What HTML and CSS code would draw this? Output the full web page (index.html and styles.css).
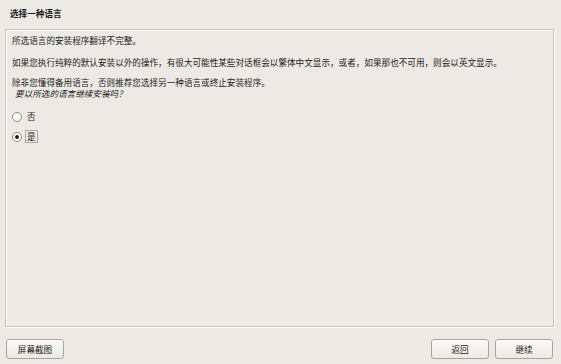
FILE: index.html
```html
<!DOCTYPE html>
<html lang="zh-CN">
  <head>
    <meta charset="UTF-8" />
    <title>选择一种语言</title>
    <link rel="stylesheet" href="styles.css">
  </head>
  <body>
    <div class="window">
      <h1 class="title">选择一种语言</h1>

      <div class="panel">
        <p>所选语言的安装程序翻译不完整。</p>
        <p class="before-tight">如果您执行纯粹的默认安装以外的操作，有很大可能性某些对话框会以繁体中文显示，或者，如果那也不可用，则会以英文显示。</p>
        <p class="tight">除非您懂得备用语言，否则推荐您选择另一种语言或终止安装程序。</p>
        <p class="question">要以所选的语言继续安装吗？</p>

        <label class="choice">
          <span class="radio"></span>
          <span class="label">否</span>
        </label>
        <label class="choice">
          <span class="radio checked"></span>
          <span class="label focused">是</span>
        </label>
      </div>

      <div class="buttons">
        <button class="btn">屏幕截图</button>
        <div class="spacer"></div>
        <button class="btn">返回</button>
        <button class="btn">继续</button>
      </div>
    </div>
  </body>
</html>
```

FILE: styles.css
```css
html, body {
    margin: 0;
    padding: 0;
    height: 100%;
}

body {
    font-family: "Noto Sans CJK SC", "Noto Sans", sans-serif;
    font-size: 8.6px;
    color: #1a1a1a;
    background-color: #edeae6;
}

.window {
    display: flex;
    flex-direction: column;
    height: 364px;
    box-sizing: border-box;
    padding: 0 7px 6px 5px;
}

.title {
    margin: 0;
    padding: 6px 0 0 5px;
    height: 29px;
    box-sizing: border-box;
    font-size: 8.6px;
    font-weight: 700;
    line-height: 14px;
}

.panel {
    flex: 1;
    border: 1px solid #c8c3bc;
    box-shadow: inset 1px 1px 0 #ffffff, 1px 1px 0 #ffffff;
    padding: 2.5px 6px;
    display: flex;
    flex-direction: column;
}

.panel p {
    margin: 0 0 8.5px 0;
    line-height: 14px;
}

.panel p.before-tight {
    margin-bottom: 7.5px;
}

.panel p.tight {
    margin-bottom: 0;
    line-height: 11px;
}

.panel p.question {
    font-style: italic;
    padding-left: 3px;
    margin: 0.5px 0 7.5px 0;
    line-height: 11px;
}

.choice {
    display: flex;
    align-items: center;
    gap: 4px;
    height: 20px;
}

.radio {
    width: 8px;
    height: 8px;
    border: 1px solid #8e8880;
    border-radius: 50%;
    background: #ffffff;
    position: relative;
}

.radio.checked::after {
    content: "";
    position: absolute;
    left: 2px;
    top: 2px;
    width: 4px;
    height: 4px;
    border-radius: 50%;
    background: #1a1a1a;
}

.label {
    line-height: 11px;
    padding: 0 1px;
}

.label.focused {
    outline: 1px solid #b0aaa2;
    outline-offset: 0;
}

.buttons {
    display: flex;
    align-items: center;
    gap: 6px;
    height: 31px;
    padding: 1px 1px 0 0;
    box-sizing: border-box;
}

.spacer {
    flex: 1;
}

.btn {
    width: 58px;
    height: 20px;
    margin-top: 12px;
    font-family: "Noto Sans CJK SC", "Noto Sans", sans-serif;
    font-size: 8.6px;
    color: #1a1a1a;
    border: 1px solid #aaa49c;
    border-radius: 3px;
    background: linear-gradient(to bottom, #fbfaf9 0%, #ece9e5 100%);
    box-shadow: inset 0 1px 0 #ffffff;
    padding: 0;
}

.btn:first-child {
    margin-left: 1px;
}
```
